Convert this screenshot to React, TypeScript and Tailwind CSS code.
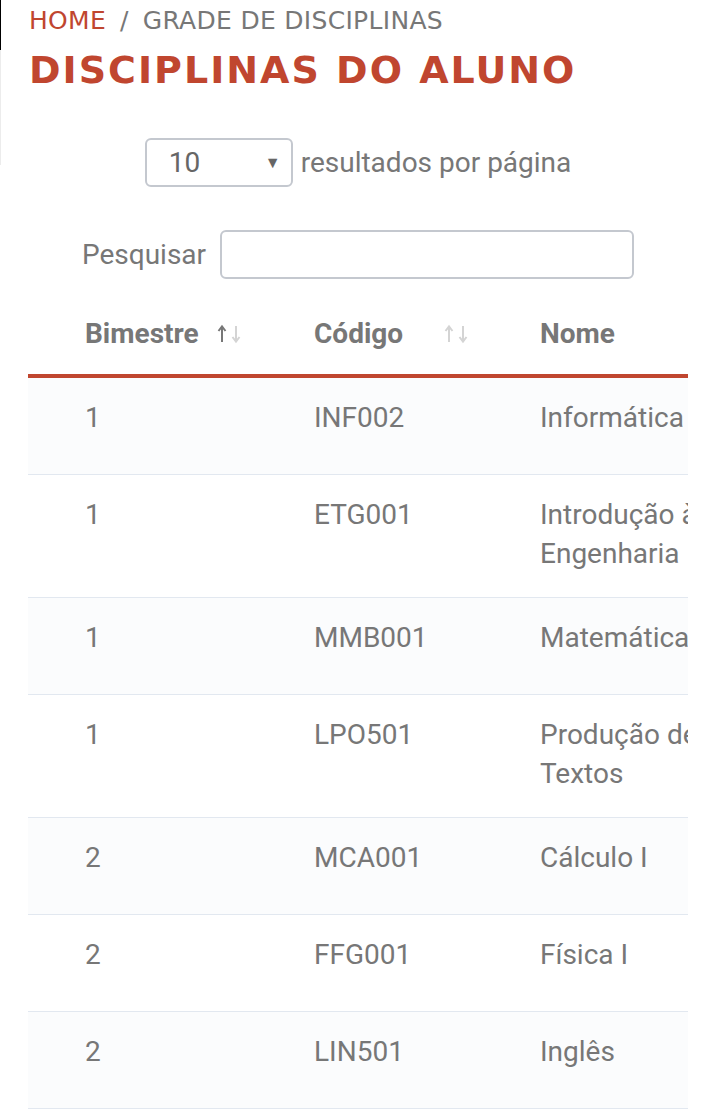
import React from "react";

const rows: { bim: string; code: string; name: string }[] = [
  { bim: "1", code: "INF002", name: "Informática" },
  { bim: "1", code: "ETG001", name: "Introdução à Engenharia" },
  { bim: "1", code: "MMB001", name: "Matemática" },
  { bim: "1", code: "LPO501", name: "Produção de Textos" },
  { bim: "2", code: "MCA001", name: "Cálculo I" },
  { bim: "2", code: "FFG001", name: "Física I" },
  { bim: "2", code: "LIN501", name: "Inglês" },
];

const SortIcon = ({ active }: { active?: boolean }) => (
  <svg width="26" height="20" viewBox="0 0 26 20" className="shrink-0">
    <g fill="none" strokeWidth="2" strokeLinecap="butt">
      <path d="M5 18V3M1.5 7L5 2.5L8.5 7" stroke={active ? "#777777" : "#d4d4d4"} />
      <path d="M19 2V17M15.5 13L19 17.5L22.5 13" stroke="#d4d4d4" />
    </g>
  </svg>
);

const App: React.FC = () => {
  return (
    <div className="min-h-screen w-full bg-white flex">
      {/* left edge of the frame */}
      <div className="w-px shrink-0 flex flex-col">
        <div className="h-[50px] bg-black" />
        <div className="h-[115px] bg-[#ececec]" />
      </div>

      <div className="flex-1 pl-[27px] pr-[36px] overflow-hidden">
        {/* Breadcrumb */}
        <div className="pt-[3px] flex items-center font-['DejaVu_Sans',sans-serif] text-[25px] leading-[36px] tracking-[0.3px] pl-px">
          <span className="text-[#c0462f]">HOME</span>
          <span className="text-[#777777] mx-[14px]">/</span>
          <span className="text-[#777777]">GRADE DE DISCIPLINAS</span>
        </div>

        {/* Title */}
        <h1 className="mt-[8px] pl-px font-['DejaVu_Sans',sans-serif] font-bold text-[38px] leading-[46px] tracking-[2px] text-[#c0462f]">
          DISCIPLINAS DO ALUNO
        </h1>

        <div className="font-['Roboto',sans-serif] text-[#777777]">
          {/* Length selector */}
          <div className="mt-[45px] flex items-center justify-center">
            <div className="w-[148px] h-[49px] border-2 border-[#c4c8cf] rounded-[6px] flex items-center justify-between pl-[22px] pr-[10px]">
              <span className="text-[28px] text-[#666666]">10</span>
              <span className="text-[16px] text-[#666666]">▼</span>
            </div>
            <span className="ml-[8px] text-[28px] leading-[39px]">resultados por página</span>
          </div>

          {/* Search */}
          <div className="mt-[43px] flex items-center justify-center">
            <span className="text-[28px] leading-[39px]">Pesquisar</span>
            <div className="ml-[14px] w-[414px] h-[49px] border-2 border-[#c4c8cf] rounded-[6px] bg-white" />
          </div>

          {/* Table */}
          <div className="mt-[17px] overflow-hidden">
            <table className="table-fixed border-collapse w-[900px] text-[28px] leading-[39px]">
              <colgroup>
                <col className="w-[229px]" />
                <col className="w-[227px]" />
                <col className="w-[236px]" />
                <col />
              </colgroup>
              <thead>
                <tr className="border-b-[4px] border-[#c0462f]">
                  <th className="pl-[57px] pr-[14px] pt-[18px] pb-[21px] text-left font-bold">
                    <div className="flex items-center justify-between">
                      <span>Bimestre</span>
                      <SortIcon active />
                    </div>
                  </th>
                  <th className="pl-[57px] pr-[14px] pt-[18px] pb-[21px] text-left font-bold">
                    <div className="flex items-center justify-between">
                      <span>Código</span>
                      <SortIcon />
                    </div>
                  </th>
                  <th className="pl-[56px] pt-[18px] pb-[21px] text-left font-bold">Nome</th>
                  <th />
                </tr>
              </thead>
              <tbody>
                {rows.map((r, i) => (
                  <tr
                    key={r.code}
                    className={`${i === 0 ? "h-[98px]" : "h-[97px]"} border-b border-[#e2e8f0] ${i % 2 === 0 ? "bg-[#fbfcfd]" : "bg-white"}`}
                  >
                    <td className="align-top pl-[57px] pt-[20px] pb-[24px]">{r.bim}</td>
                    <td className="align-top pl-[57px] pt-[20px] pb-[24px]">{r.code}</td>
                    <td className="align-top pl-[56px] pt-[20px] pb-[24px]">{r.name}</td>
                    <td />
                  </tr>
                ))}
              </tbody>
            </table>
          </div>
        </div>
      </div>
    </div>
  );
};

export default App;
